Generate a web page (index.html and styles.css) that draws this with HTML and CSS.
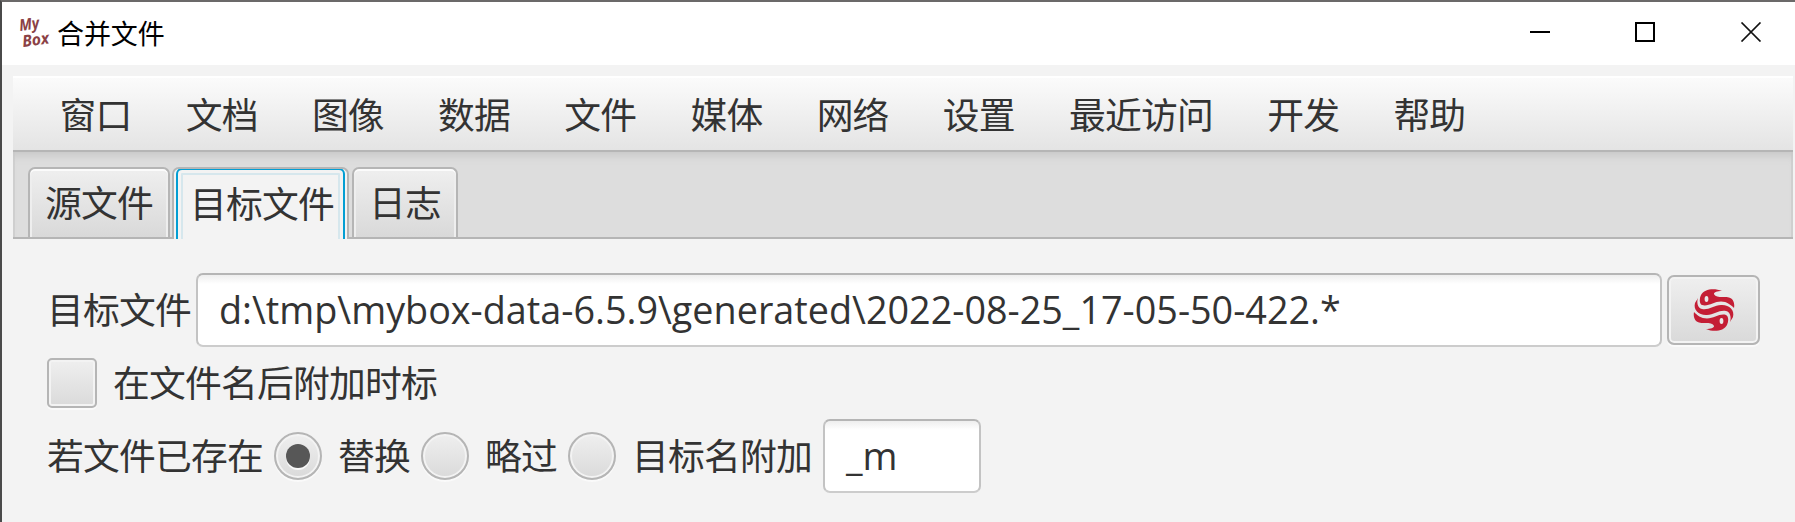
FILE: index.html
```html
<!DOCTYPE html>
<html lang="zh-CN">
<head>
<meta charset="utf-8">
<title>合并文件</title>
<link rel="stylesheet" href="styles.css">
</head>
<body>
<div class="window">
  <header class="titlebar">
    <svg class="logo" width="36" height="44" viewBox="0 0 36 44">
      <g class="logo-text">
        <text transform="translate(1 20) rotate(-8)" textLength="20" lengthAdjust="spacingAndGlyphs">My</text>
        <text transform="translate(4 36) rotate(-8)" textLength="27" lengthAdjust="spacingAndGlyphs">Box</text>
      </g>
    </svg>
    <h1 class="title">合并文件</h1>
    <svg class="controls" width="232" height="20" viewBox="0 0 232 20">
      <path d="M0 10H20" stroke="#000" stroke-width="2"/>
      <rect x="106" y="1" width="18" height="18" fill="none" stroke="#000" stroke-width="2"/>
      <path d="M211.500 .5L230.500 19.500M230.500 .5L211.500 19.500" stroke="#111" stroke-width="1.700"/>
    </svg>
  </header>
  <nav class="menubar">
    <span>窗口</span><span>文档</span><span>图像</span><span>数据</span><span>文件</span><span>媒体</span><span>网络</span><span>设置</span><span>最近访问</span><span>开发</span><span>帮助</span>
  </nav>
  <div class="tabs">
    <div class="tab tab-source">源文件</div>
    <div class="tab tab-active"><div class="focus">目标文件</div></div>
    <div class="tab tab-log">日志</div>
  </div>
  <main class="form">
    <div class="row row-file">
      <span class="label">目标文件</span>
      <div class="field field-path"><span class="path">d:\tmp\mybox-data-6.5.9\generated\2022-08-25_17-05-50-422.*</span></div>
      <button class="button" type="button">
        <svg width="42" height="42" viewBox="0 0 42 42">
          <defs>
            <g id="fish">
              <path d="M29 2C21 -1.500 11 0 8 6C6 10 6.500 15 9 16C15 18 21 12.500 28 12.500C34 12.500 38 16 41 19C42 14 40 9.500 36 8.500C31 7 27 9 23 7C18.500 4.500 22 2 29 2Z"/>
              <ellipse cx="13.500" cy="10" rx="1.900" ry="3" fill="#e8e8e8"/>
            </g>
          </defs>
          <g fill="#c41e35">
            <use href="#fish"/>
            <use href="#fish" transform="rotate(180 21 21)"/>
            <path d="M5 9C3.500 13 4.500 19 9 20C15 21.500 21 16.500 28 16C36 15.500 42 21 40 28L37 33C38.500 29 37.500 23 33 22C27 20.500 21 25.500 14 26C6 26.500 0 21 2 14Z"/>
          </g>
        </svg>
      </button>
    </div>
    <div class="row row-stamp"><span class="checkbox"></span><span class="label">在文件名后附加时标</span></div>
    <div class="row row-exists">
      <span class="label label-exists">若文件已存在</span>
      <span class="radio checked"></span><span class="label option">替换</span>
      <span class="radio"></span><span class="label option">略过</span>
      <span class="radio"></span><span class="label option-last">目标名附加</span>
      <div class="field field-suffix">_m</div>
    </div>
  </main>
</div>
</body>
</html>
```
FILE: styles.css
```css
* { box-sizing: border-box; }
body {
  margin: 0;
  width: 1795px;
  height: 522px;
  overflow: hidden;
  background: #f3f3f3;
  color: #333;
  font: 36.8px/48px "Noto Sans CJK SC", sans-serif;
  letter-spacing: -.8px;
  white-space: nowrap;
}
.window { height: 522px; border-top: 2px solid #6b6969; border-left: 2px solid #4a4a4a; }
.titlebar { display: flex; align-items: center; height: 63px; padding: 0 33px 0 17px; background: #fff; }
.logo { margin-top: -2px; }
.logo-text { fill: #8b4145; font: italic 700 16px "Open Sans", sans-serif; letter-spacing: 0; }
.title { margin: -2px auto 0 2px; color: #000; font-size: 27px; font-weight: 400; line-height: 40px; letter-spacing: -.1px; }
.controls { margin-top: -3px; }
.menubar {
  display: flex;
  align-items: center;
  gap: 54.2px;
  height: 76px;
  margin: 11px 2px 0 11px;
  padding: 0 0 3px 46.5px;
  border-top: 2px solid #fff;
  border-bottom: 2px solid #b5b5b5;
  background: linear-gradient(#fbfbfb, #e4e4e4);
}
.tabs {
  display: flex;
  align-items: flex-end;
  gap: 3px;
  height: 87px;
  margin: 0 2px 0 11px;
  padding-left: 15px;
  border-bottom: 2px solid #b5b5b5;
  background: #ddd;
  box-shadow: inset 0 9px 8px -5px #c8c8c8, inset 2px 0 #d0d0d0, inset -2px 0 #d0d0d0;
}
.tab {
  height: 70px;
  padding: 8px 0 0 15px;
  border: 2px solid #b5b5b5;
  border-bottom: 0;
  border-radius: 7px 7px 0 0;
  background: linear-gradient(#efefef, #d9d9d9);
  box-shadow: inset 0 2px #fbfbfb, inset 2px 0 #eee, inset -2px 0 #eee;
}
.tab-source { width: 142px; margin-right: -1px; }
.tab-active { width: 177px; height: 72px; margin-bottom: -2px; padding: 0 2px; background: #f3f3f3; box-shadow: none; overflow: hidden; }
.tab-log { width: 106px; }
.focus {
  height: 78px;
  margin-top: -1px;
  padding: 8px 0 0 12px;
  border: 2px solid #039ed3;
  border-bottom: 0;
  border-radius: 6px 6px 0 0;
  box-shadow: inset 0 0 0 3px #f3f3f3, inset 0 0 0 5px #d6e7ed;
}
.form { padding: 34px 33px 0 45px; }
.label { position: relative; top: -2px; }
.row { display: flex; align-items: center; }
.row-file { height: 74px; }
.field {
  height: 74px;
  padding-left: 21px;
  border: 2px solid #ccc;
  border-color: #b5b5b5 #c3c3c3 #ccc;
  border-radius: 7px;
  background: linear-gradient(#eee, #fff 9px);
  font: 37.75px/70px "Open Sans", "Noto Sans CJK SC", sans-serif;
  letter-spacing: 0;
}
.field-path { width: 1466px; margin-left: 5px; }
.button {
  display: grid;
  place-items: center;
  width: 93px;
  height: 70px;
  margin-left: 5px;
  padding: 0;
  border: 2px solid #b5b5b5;
  border-radius: 7px;
  background: linear-gradient(#efefef, #d9d9d9);
  box-shadow: inset 0 0 0 2px #f3f3f3, 0 2px #fafafa;
}
.row-stamp { height: 50px; margin-top: 11px; }
.checkbox {
  width: 50px;
  height: 50px;
  margin-right: 16px;
  border: 2px solid #b5b5b5;
  border-radius: 5px;
  background: linear-gradient(#efefef, #dadada);
  box-shadow: inset 0 0 0 2px #f3f3f3, 0 2px #fafafa;
}
.row-exists { height: 74px; margin-top: 11px; }
.radio {
  display: grid;
  place-items: center;
  width: 48px;
  height: 48px;
  margin-right: 16px;
  border: 2px solid #b5b5b5;
  border-radius: 50%;
  background: linear-gradient(#efefef, #dadada);
  box-shadow: inset 0 0 0 2px #f3f3f3, 0 2px #fafafa;
}
.checked::after { content: ""; width: 24px; height: 24px; border-radius: 50%; background: #575757; box-shadow: 0 2px #fafafa; }
.label-exists, .option, .option-last { margin-right: 11px; }
.field-suffix { width: 158px; }
```
